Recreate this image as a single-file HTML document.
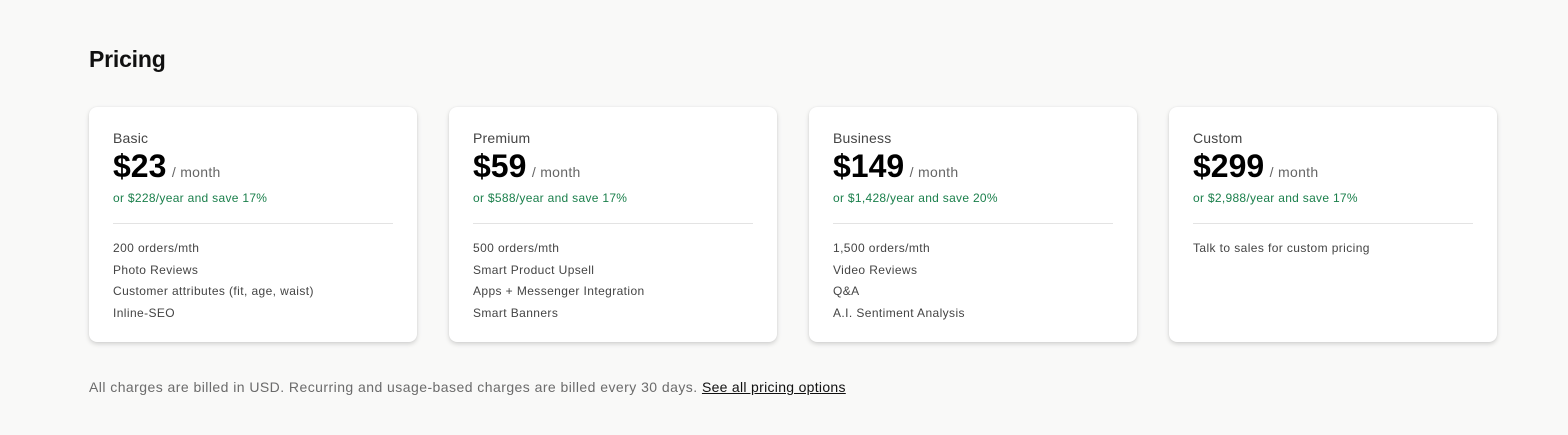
<!DOCTYPE html>
<html><head><style>
body{margin:0;background:#f9f9f8;font-family:"Liberation Sans",Arial,sans-serif;width:1568px;height:435px;overflow:hidden;position:relative}
h1{position:absolute;left:89px;top:46px;margin:0;font-size:23px;font-weight:bold;color:#111;letter-spacing:-0.2px}
.card{position:absolute;top:107px;width:328px;height:235px;background:#fff;border-radius:8px;box-shadow:0 2px 5px rgba(0,0,0,.16),0 0 1px rgba(0,0,0,.1);box-sizing:border-box}
.t{position:absolute;top:23px;left:24px;font-size:14px;color:#444;letter-spacing:0.2px}
.p{position:absolute;top:41px;left:24px;white-space:nowrap}
.p b{font-size:32px;color:#000}
.p span{font-size:14px;color:#666;margin-left:1px;letter-spacing:0.3px}
.g{position:absolute;top:84px;left:24px;font-size:12px;color:#1a7f4b;letter-spacing:0.3px}
.hr{position:absolute;top:116px;left:24px;right:24px;border-top:1px solid #e3e3e3}
.f{position:absolute;top:131px;left:24px;font-size:12px;color:#444;line-height:21.5px;letter-spacing:0.4px}
.foot{position:absolute;left:89px;top:379px;font-size:14px;color:#6b6b6b;letter-spacing:0.45px}
.foot a{color:#111;text-decoration:underline;letter-spacing:0.3px}
</style></head><body>
<h1>Pricing</h1>
<div class="card" style="left:89px"><div class="t">Basic</div><div class="p"><b>$23</b> <span>/ month</span></div><div class="g">or $228/year and save 17%</div><div class="hr"></div><div class="f">200 orders/mth<br>Photo Reviews<br>Customer attributes (fit, age, waist)<br>Inline-SEO</div></div>
<div class="card" style="left:449px"><div class="t">Premium</div><div class="p"><b>$59</b> <span>/ month</span></div><div class="g">or $588/year and save 17%</div><div class="hr"></div><div class="f">500 orders/mth<br>Smart Product Upsell<br>Apps + Messenger Integration<br>Smart Banners</div></div>
<div class="card" style="left:809px"><div class="t">Business</div><div class="p"><b>$149</b> <span>/ month</span></div><div class="g">or $1,428/year and save 20%</div><div class="hr"></div><div class="f">1,500 orders/mth<br>Video Reviews<br>Q&amp;A<br>A.I. Sentiment Analysis</div></div>
<div class="card" style="left:1169px"><div class="t">Custom</div><div class="p"><b>$299</b> <span>/ month</span></div><div class="g">or $2,988/year and save 17%</div><div class="hr"></div><div class="f">Talk to sales for custom pricing</div></div>
<div class="foot">All charges are billed in USD. Recurring and usage-based charges are billed every 30 days. <a>See all pricing options</a></div>
</body></html>
